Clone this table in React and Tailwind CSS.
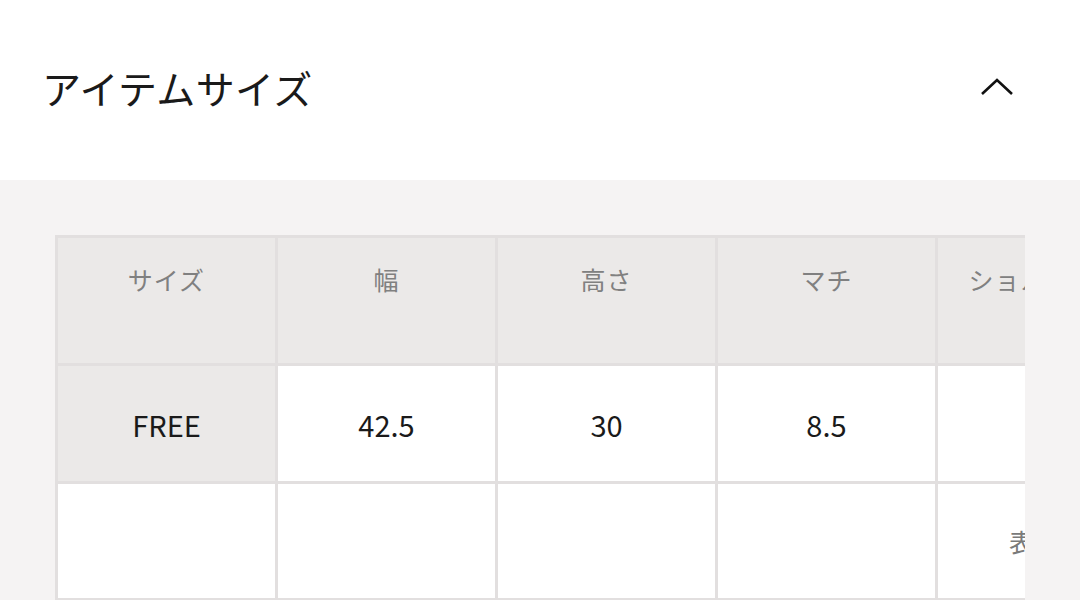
import React from 'react';

const HEAD = ['サイズ', '幅', '高さ', 'マチ', 'ショルダー丈'];
const ROWS = [
    ['FREE', '42.5', '30', '8.5', ''],
    ['', '', '', '', '表参照'],
];

const FONT = { fontFamily: '"Noto Sans CJK JP", "Noto Sans", sans-serif' };

export default function App() {
    return (
        <div className="w-[1080px] h-[600px] overflow-hidden bg-white" style={FONT}>
            <div className="h-[180px] flex items-center justify-between pl-[42px] pr-[66px] pb-[6px]">
                <h2 className="text-[39px] font-normal text-[#1a1a1a] tracking-[0.01em]">アイテムサイズ</h2>
                <svg width="34" height="20" viewBox="0 0 34 20" fill="none">
                    <path d="M2 17L17 3L32 17" stroke="#111" strokeWidth="2.6" />
                </svg>
            </div>
            <div className="bg-[#f5f3f3] h-[420px] pt-[55px] pl-[55px] pr-[55px]">
                <div className="overflow-hidden w-[970px]">
                    <table className="border-collapse w-[1103px] table-fixed">
                        <thead>
                            <tr className="h-[128px]">
                                {HEAD.map((h) => (
                                    <th
                                        key={h}
                                        className="w-[220px] border-[3px] border-[#e2dfdf] bg-[#ebe9e8] align-top pt-[23px] text-[25px] tracking-[0.04em] font-normal text-[#808080] leading-[36px] whitespace-nowrap"
                                    >
                                        {h}
                                    </th>
                                ))}
                            </tr>
                        </thead>
                        <tbody>
                            {ROWS.map((row, i) => (
                                <tr key={i} className={i === 0 ? 'h-[118px]' : 'h-[117px]'}>
                                    {row.map((v, j) => (
                                        <td
                                            key={j}
                                            className={`border-[3px] border-[#e2dfdf] text-center leading-[36px] ${
                                                j === 0 && i === 0 ? 'bg-[#ebe9e8]' : 'bg-white'
                                            } ${j === 4 && i === 1 ? 'text-[#7a7a7a] text-[25px]' : 'text-[#1a1a1a] text-[29px]'}`}
                                        >
                                            {v}
                                        </td>
                                    ))}
                                </tr>
                            ))}
                        </tbody>
                    </table>
                </div>
            </div>
        </div>
    );
}
